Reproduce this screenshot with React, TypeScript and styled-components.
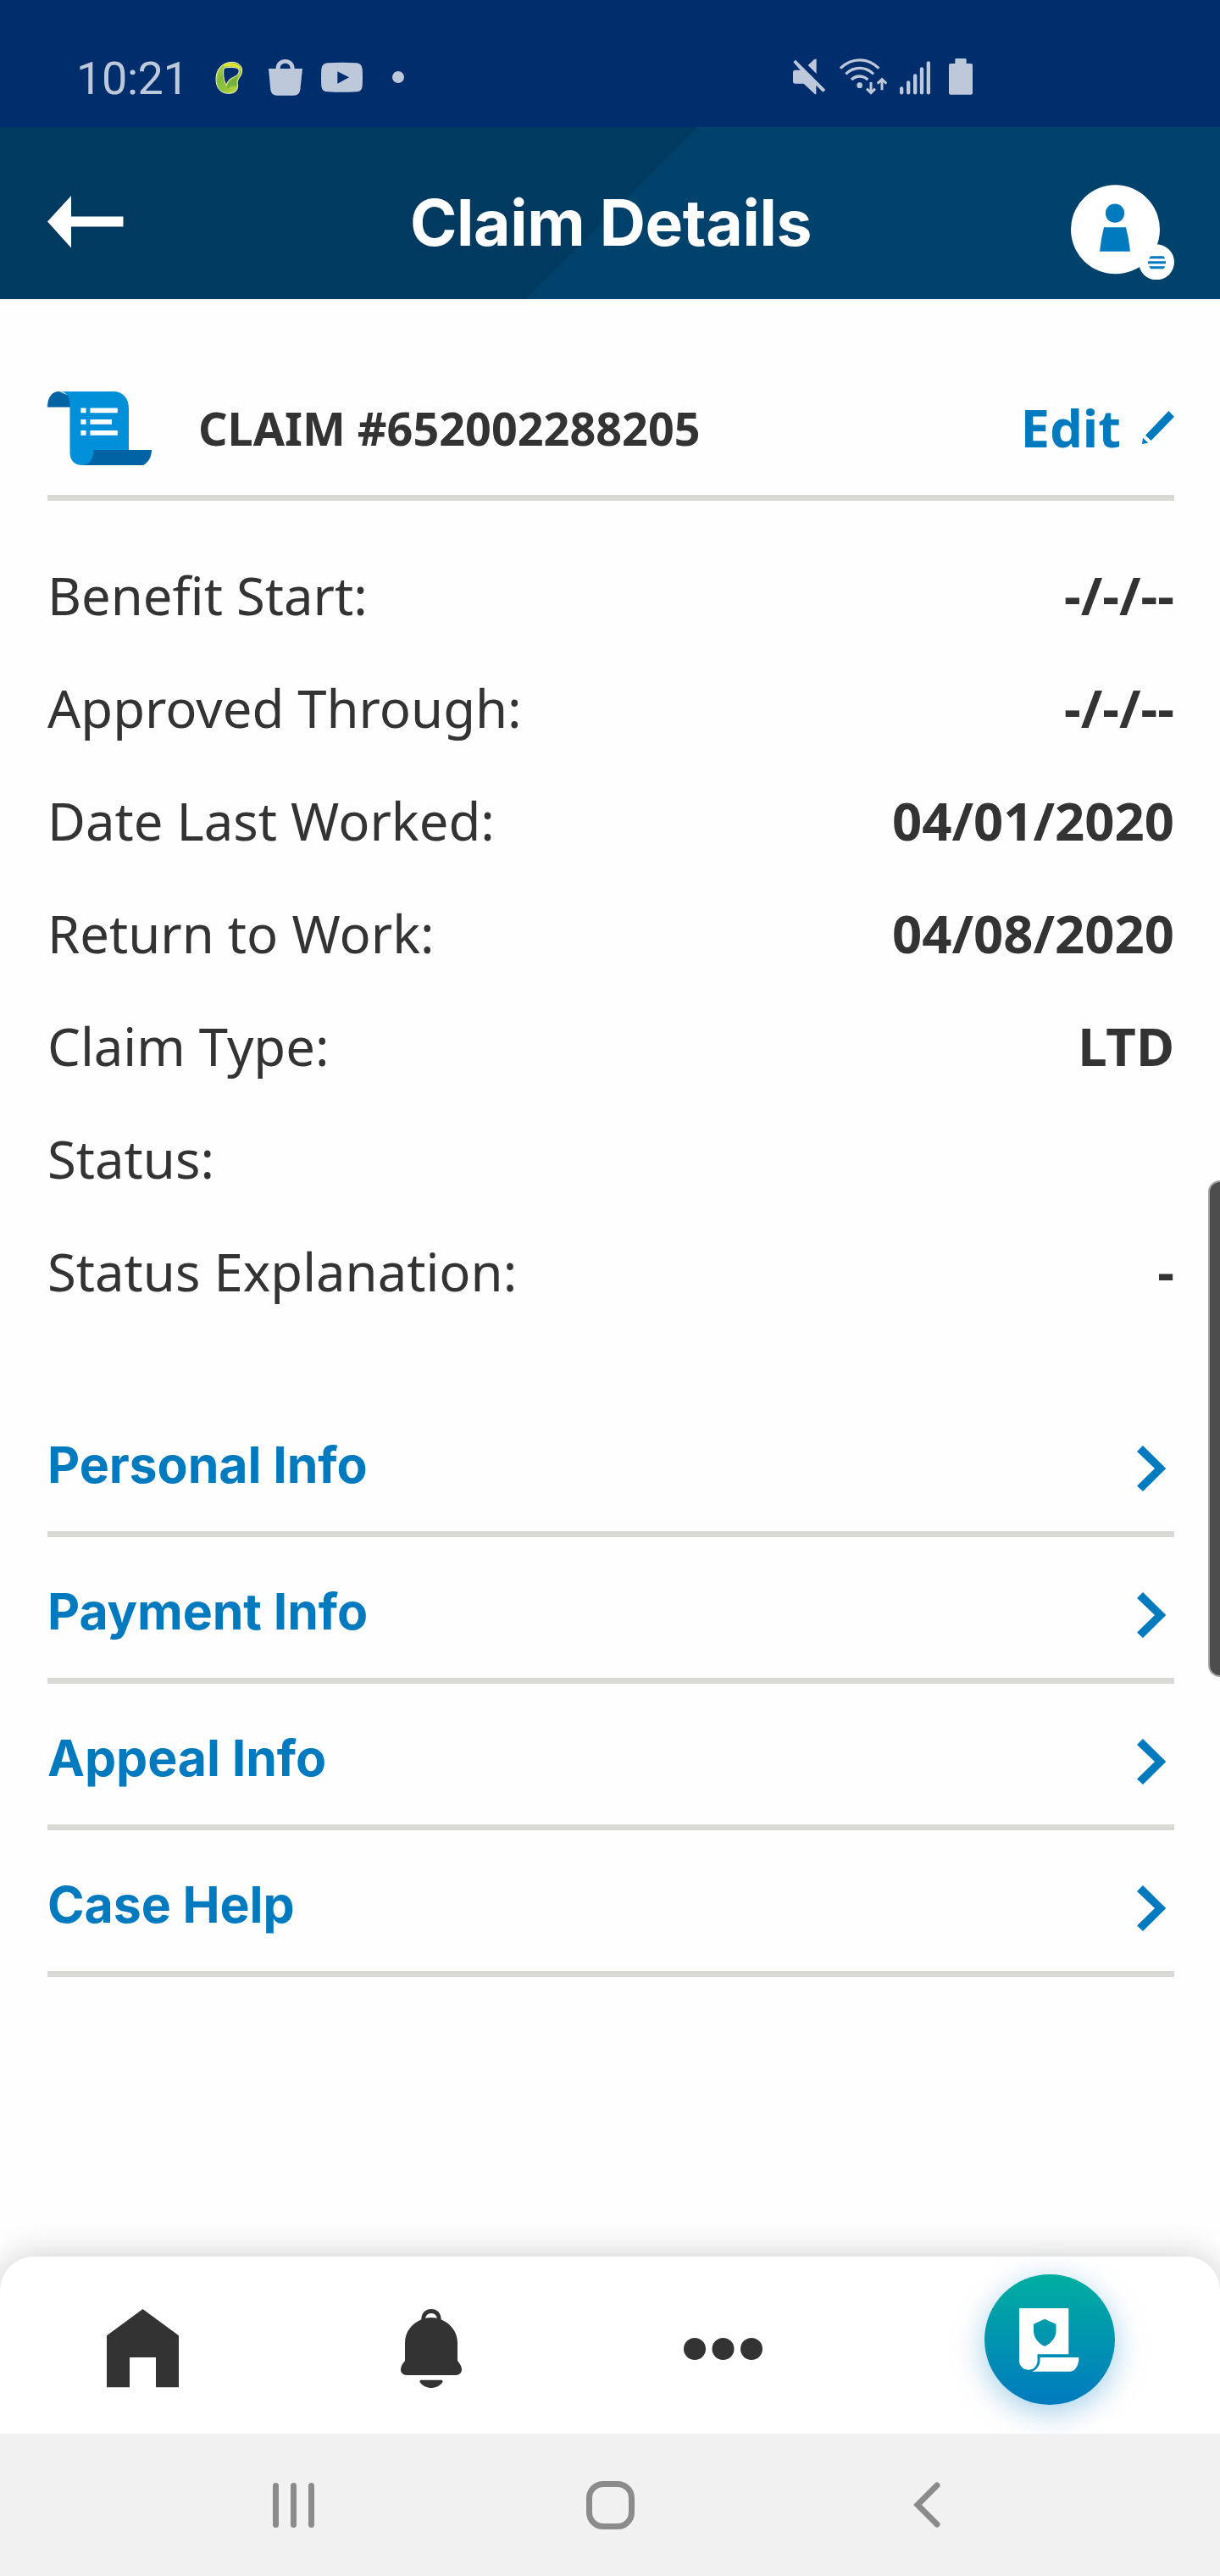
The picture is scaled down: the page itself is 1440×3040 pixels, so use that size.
import React from 'react';
import styled, { createGlobalStyle } from 'styled-components';

const blue = '#007abf';
const ink = '#333333';
const statusInk = '#bdc8da';

const GlobalStyle = createGlobalStyle`
  * { box-sizing: border-box; }
  html, body { margin: 0; padding: 0; background: #fff; }
  body { overflow-x: hidden; }
  svg { display: block; flex: none; }
`;

const Screen = styled.div`
  position: relative;
  width: 1440px;
  height: 3040px;
  display: flex;
  flex-direction: column;
  overflow: hidden;
  background: #fefefe;
  color: ${ink};
  font-family: 'Noto Sans', 'Open Sans', sans-serif;
`;

const StatusBar = styled.div`
  height: 150px;
  padding: 68px 292px 0 90px;
  display: flex;
  justify-content: space-between;
  align-items: flex-start;
  background: #002e6d;
  color: ${statusInk};
`;

const StatusGroup = styled.div`
  display: flex;
  align-items: center;
  height: 45px;
`;

const Clock = styled.div`
  width: 163px;
  font: 400 54px/45px Roboto, sans-serif;
  letter-spacing: -0.4px;
  padding-top: 3px;
`;

const StatusIcon = styled.svg<{ $gap?: number }>`
  height: 45px;
  margin-left: ${(p) => p.$gap ?? 0}px;
`;

const Header = styled.header`
  height: 203px;
  padding: 20px 54px 0 56px;
  display: grid;
  grid-template-columns: 1fr auto 1fr;
  align-items: center;
  color: #fff;
  background: linear-gradient(135deg, #003a61 582px, #00426c 583px);
`;

const Title = styled.h1`
  margin: 2px 0 0;
  font: 700 75px/90px Inter, sans-serif;
  letter-spacing: -0.35px;
`;

const Avatar = styled.svg`
  justify-self: end;
  margin-top: 25px;
`;

const Main = styled.main`
  height: 2310px;
  padding: 73px 54px 0 56px;
`;

const ClaimHeader = styled.div`
  height: 165px;
  display: flex;
  align-items: center;
  border-bottom: 7px solid #d9dad5;
`;

const ClaimNumber = styled.h2`
  flex: 1;
  margin: 0 0 0 55px;
  font-size: 53.9px;
  font-weight: 700;
  line-height: 74px;
`;

const EditLink = styled.a`
  display: flex;
  align-items: center;
  gap: 25px;
  margin-top: -2px;
  color: ${blue};
  font-size: 61.6px;
  font-weight: 700;
  line-height: 84px;
`;

const Details = styled.dl`
  margin: 44px 0 75px;
`;

const Detail = styled.div`
  height: 133px;
  display: flex;
  justify-content: space-between;
  align-items: center;
  font-size: 61.6px;
  line-height: 86px;
`;

const Label = styled.dt``;

const Value = styled.dd`
  margin: 0;
  font-weight: 700;
`;

const SectionLink = styled.a`
  height: 173px;
  padding: 18px 10px 0 0;
  display: flex;
  justify-content: space-between;
  align-items: center;
  border-bottom: 7px solid #d9dad5;
  color: ${blue};
  font: 700 59px/72px Inter, sans-serif;
  letter-spacing: -0.1px;

  span { margin-top: -9px; }
`;

const ScrollThumb = styled.div`
  position: absolute;
  right: -3px;
  top: 1393px;
  width: 17px;
  height: 586px;
  border: 2px solid #a2a2a2;
  border-radius: 14px 0 0 14px;
  background: #4d4d4d;
`;

const TabBar = styled.nav`
  height: 209px;
  padding: 8px 0 0 126px;
  display: flex;
  align-items: center;
  gap: 262px;
  border-radius: 40px 40px 0 0;
  background: #fff;
  box-shadow: 0 0 42px rgba(0, 0, 0, 0.2);
`;

const Fab = styled.button`
  flex: none;
  width: 154px;
  height: 154px;
  margin: -21px 0 0;
  padding: 0 0 0 41px;
  display: flex;
  align-items: center;
  border: 0;
  border-radius: 50%;
  background: linear-gradient(#00aea0, #007abf);
  box-shadow: 0 9px 36px rgba(0, 122, 191, 0.36);
`;

const SystemNav = styled.div`
  position: relative;
  height: 168px;
  padding-left: 322px;
  display: flex;
  align-items: center;
  background: #f1f1f1;
`;

const RecentsKey = styled.div`
  width: 49px;
  height: 53px;
  margin-right: 321px;
  display: flex;
  justify-content: space-between;
`;

const RecentsBar = styled.i`
  width: 7px;
  border-radius: 4px;
  background: #8b8b8b;
`;

const HomeKey = styled.div`
  width: 57px;
  height: 57px;
  margin-right: 329px;
  border: 7px solid #8b8b8b;
  border-radius: 20px;
`;

const details: [string, string][] = [
  ['Benefit Start:', '-/-/--'],
  ['Approved Through:', '-/-/--'],
  ['Date Last Worked:', '04/01/2020'],
  ['Return to Work:', '04/08/2020'],
  ['Claim Type:', 'LTD'],
  ['Status:', ''],
  ['Status Explanation:', '-'],
];

const sections = ['Personal Info', 'Payment Info', 'Appeal Info', 'Case Help'];

const NotificationIcons = () => (
  <>
    <StatusIcon viewBox="576 84 105 135" width="35">
      <defs>
        <linearGradient id="ring" x1="0" y1="0" x2="1" y2="1">
          <stop offset="0" stopColor="#d3df3a" />
          <stop offset=".35" stopColor="#7fb83c" />
          <stop offset=".7" stopColor="#9fca3a" />
          <stop offset="1" stopColor="#dde038" />
        </linearGradient>
      </defs>
      <path
        fill="url(#ring)"
        stroke="#eff3cf"
        strokeWidth="3"
        fillRule="evenodd"
        d="M636 100C660 99 675 113 674 132C673 151 656 159 658 176C662 199 650 211 626 211C598 211 582 191 582 160C582 125 603 102 636 100ZM610 121C606 138 608 165 619 182C623 160 636 158 652 149C662 143 666 133 661 123C650 117 624 117 610 121Z"
      />
      <path fill="#e0e236" d="M610 107C635 97 672 104 672 134C668 118 650 115 610 116Z" />
      <path fill="#72b13c" d="M622 186C626 164 645 162 660 147C653 167 656 178 656 188C645 180 635 182 622 195Z" />
    </StatusIcon>
    <StatusIcon viewBox="771 84 120 135" width="40" $gap={29} fill="currentColor">
      <path d="M771 123H797C797 103 811 90 830 90S863 103 863 123H891L883 198Q880 218 860 218H801Q781 218 778 198ZM812 123H848C848 111 841 104 830 104S812 111 812 123Z" />
    </StatusIcon>
    <StatusIcon viewBox="957 84 147 135" width="49" $gap={22} fill="currentColor">
      <path
        fillRule="evenodd"
        d="M981 103Q1030 100 1081 103Q1101 104 1103 124Q1105 155 1103 185Q1101 204 1081 205Q1030 208 981 205Q960 204 958 185Q956 155 958 124Q960 104 981 103ZM1015 133V176L1056 154Z"
      />
    </StatusIcon>
    <StatusIcon viewBox="1209 84 42 135" width="14" $gap={35} fill="currentColor">
      <circle cx="1230" cy="153" r="21" />
    </StatusIcon>
  </>
);

const SystemIcons = () => (
  <>
    <StatusIcon viewBox="108 84 117 135" width="39" fill="currentColor">
      <path d="M117 92L223 198L214 206L190 182V214H186L146 176H116Q108 176 108 168V136Q108 128 116 128H134L109 100ZM191 89V141L161 111L184 89Z" />
    </StatusIcon>
    <StatusIcon viewBox="272 84 168 135" width="56" $gap={16} fill="none" stroke="currentColor">
      <g strokeWidth="10">
        <path d="M275 122C315 83 370 83 411 122" />
        <path d="M294 142C322 114 363 114 392 142" />
        <path d="M314 162C331 146 355 146 372 162" />
      </g>
      <circle cx="343" cy="182" r="10" fill="currentColor" stroke="none" />
      <path strokeWidth="9" d="M383 171V208M368 194L383 209L398 194M422 199V162M406 176L422 161L438 176" />
    </StatusIcon>
    <StatusIcon
      viewBox="486 84 108 135"
      width="36"
      $gap={15}
      stroke="currentColor"
      strokeWidth="13"
      strokeLinecap="round"
    >
      <path d="M492.5 193V208M516.5 172V208M540.5 148V208M564 124V208M587.5 103V208" />
    </StatusIcon>
    <StatusIcon viewBox="660 84 84 135" width="28" $gap={22} fill="currentColor">
      <path d="M686 87H718Q722 87 722 91V105H738Q744 105 744 111V209Q744 215 738 215H666Q660 215 660 209V111Q660 105 666 105H682V91Q682 87 686 87Z" />
    </StatusIcon>
  </>
);

const BackArrow = () => (
  <svg width="90" height="62" viewBox="0 0 90 62" fill="#fff">
    <path d="M0 30.5L28 0V24.500H89.500V36.500H28V61.500Z" />
  </svg>
);

const AvatarIcon = () => (
  <Avatar width="122" height="112.3" viewBox="192 113 366 337">
    <circle cx="349.5" cy="271.5" r="157.5" fill="#fff" />
    <circle cx="495" cy="387" r="63" fill="#fff" />
    <g fill={blue}>
      <circle cx="348" cy="214" r="33.5" />
      <path d="M309 264H387Q398 305 402 349H294Q298 305 309 264Z" />
      <path d="M475 366H520L526 375H468ZM465 384H528V393H465ZM468 402H526L520 411H475Z" />
    </g>
  </Avatar>
);

const ScrollIcon = () => (
  <svg width="123" height="87" viewBox="56 462 123 87">
    <path fill="#0063a3" d="M56 480.5C56 469 61 462 70 462L88 470V480.5Z" />
    <path fill="#0063a3" d="M98 549L108 531H179C179 539 175 546 169 549Z" />
    <path
      fill="#0090da"
      d="M70 462H134C145 462 152 470 152 482V531H110.5C110.5 542 105 549 97 549C88 549 82.5 543 82.5 534V478C82.5 468 78 462 70 462Z"
    />
    <path
      fill="#fff"
      d="M95.4 481.5h6.2v5.7h-6.2zM106.4 481.5h32.4v5.7h-32.4zM95.4 495h6.2v5.7h-6.2zM106.4 495h25.6v5.7h-25.6zM95.4 508h6.2v5.7h-6.2zM106.4 508h32.4v5.7h-32.4z"
    />
  </svg>
);

const PencilIcon = () => (
  <svg width="38" height="39" viewBox="624 108 114 117" fill={blue}>
    <path d="M636 194L718 108L738 128L656 213ZM627 203L646 221L624 225Z" />
  </svg>
);

const Chevron = () => (
  <svg width="34.3" height="54" viewBox="0 0 34.3 54" fill={blue}>
    <path d="M0 7L7 0L34.3 27L7 54L0 47.5L21 27Z" />
  </svg>
);

const HomeIcon = () => (
  <svg width="85" height="92.5" viewBox="138 256 255 277.5" fill={ink}>
    <path d="M138 350L265.5 256L393 350V533H312V427H219V533H138Z" />
  </svg>
);

const BellIcon = () => (
  <svg width="72" height="93" viewBox="1179 255 216 279" fill={ink}>
    <path
      fillRule="evenodd"
      d="M1252 292C1252 269 1266 255 1287 255S1322 269 1322 292C1358 308 1380 338 1380 374V438C1390 450 1395 459 1395 469C1395 481 1387 489 1374 489H1200C1187 489 1179 481 1179 469C1179 459 1184 450 1194 438V374C1194 338 1216 308 1252 292ZM1266 287Q1287 283 1308 287C1305 276 1298 270 1287 270S1269 276 1266 287Z"
    />
    <path d="M1252 506H1322C1328 506 1329 511 1326 515C1307 540 1267 540 1248 515C1245 511 1246 506 1252 506Z" />
  </svg>
);

const MoreIcon = () => (
  <svg width="93" height="26" viewBox="0 0 93 26" fill={ink}>
    <circle cx="13" cy="13" r="13" />
    <circle cx="46.5" cy="13" r="13" />
    <circle cx="80" cy="13" r="13" />
  </svg>
);

const PolicyIcon = () => (
  <svg width="71" height="75" viewBox="0 0 71 75" fill="#fff">
    <path
      fillRule="evenodd"
      d="M0 0H58.3V54.3H21.5V62C21.5 68 17 72.8 11 72.8S0 68 0 62ZM30 12.7L17 18.8V27C17 34 22 41.500 30 45C38.500 41.500 43.500 34 43.500 27V18.800Z"
    />
    <path d="M24.500 58H70.300V60C70.300 67 66 74.700 60 74.700H15C21 73 24.500 67 24.500 62Z" />
  </svg>
);

const BackKey = () => (
  <svg width="32" height="54" viewBox="0 0 32 54" fill="none" stroke="#8b8b8b" strokeWidth="7" strokeLinecap="round">
    <path d="M28 4L5 27L28 50" />
  </svg>
);

export default function App() {
  return (
    <Screen>
      <GlobalStyle />
      <StatusBar>
        <StatusGroup>
          <Clock>10:21</Clock>
          <NotificationIcons />
        </StatusGroup>
        <StatusGroup>
          <SystemIcons />
        </StatusGroup>
      </StatusBar>
      <Header>
        <BackArrow />
        <Title>Claim Details</Title>
        <AvatarIcon />
      </Header>
      <Main>
        <ClaimHeader>
          <ScrollIcon />
          <ClaimNumber>CLAIM #652002288205</ClaimNumber>
          <EditLink>
            Edit
            <PencilIcon />
          </EditLink>
        </ClaimHeader>
        <Details>
          {details.map(([label, value]) => (
            <Detail key={label}>
              <Label>{label}</Label>
              <Value>{value}</Value>
            </Detail>
          ))}
        </Details>
        {sections.map((name) => (
          <SectionLink key={name}>
            <span>{name}</span>
            <Chevron />
          </SectionLink>
        ))}
      </Main>
      <TabBar>
        <HomeIcon />
        <BellIcon />
        <MoreIcon />
        <Fab aria-label="Claims">
          <PolicyIcon />
        </Fab>
      </TabBar>
      <SystemNav>
        <RecentsKey>
          <RecentsBar />
          <RecentsBar />
          <RecentsBar />
        </RecentsKey>
        <HomeKey />
        <BackKey />
      </SystemNav>
      <ScrollThumb />
    </Screen>
  );
}
